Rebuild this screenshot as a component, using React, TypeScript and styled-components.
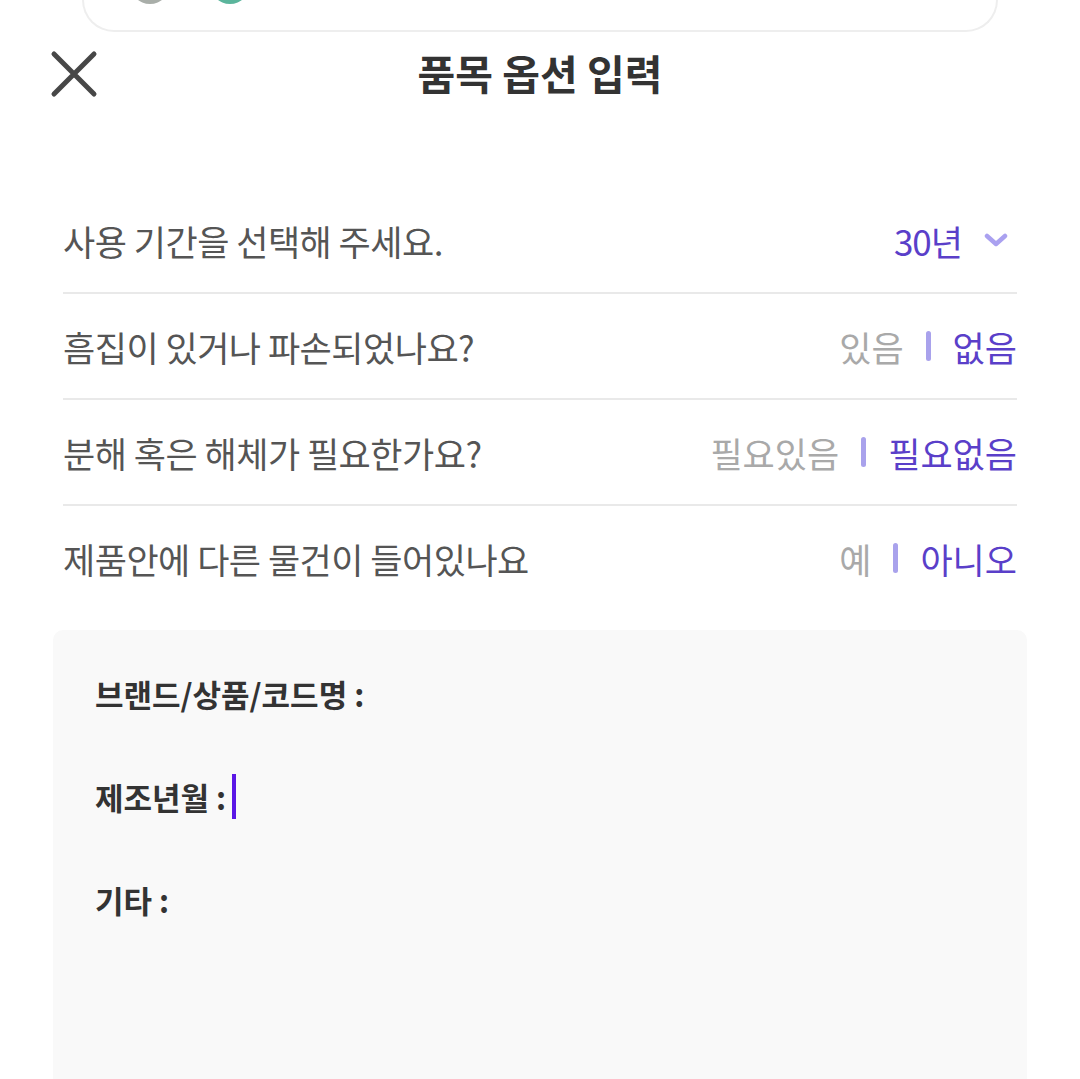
import { createGlobalStyle } from "styled-components"
import styled from "styled-components"

const GlobalStyle = createGlobalStyle`
  html, body {
    margin: 0;
    padding: 0;
    background: #ffffff;
    font-family: "Noto Sans CJK KR", "Noto Sans", sans-serif;
  }
`

const Page = styled.div`
  width: 1080px;
  height: 1079px;
  overflow: hidden;
`

const TopCard = styled.div`
  box-sizing: border-box;
  height: 32px;
  margin: 0 82px;
  border: 2px solid #eeeeee;
  border-top: none;
  border-radius: 0 0 32px 32px;
  overflow: hidden;
  display: flex;
  align-items: flex-end;
  gap: 40px;
  padding: 0 0 26px 46px;
`

const Dot = styled.div<{ $color: string }>`
  flex: none;
  width: 40px;
  height: 40px;
  border-radius: 50%;
  background: ${(p) => p.$color};
`

const Header = styled.div`
  position: relative;
  box-sizing: border-box;
  height: 86px;
  padding-bottom: 6px;
  display: flex;
  align-items: center;
  justify-content: center;
`

const CloseButton = styled.button`
  position: absolute;
  left: 48px;
  top: 16px;
  width: 52px;
  height: 52px;
  padding: 0;
  border: none;
  background: none;
  display: flex;
  align-items: center;
  justify-content: center;
`

const Title = styled.h1`
  margin: 0;
  font-size: 41px;
  font-weight: 700;
  color: #333333;
`

const List = styled.div`
  margin: 70px 63px 0;
  display: flex;
  flex-direction: column;
`

const Row = styled.div<{ $last?: boolean }>`
  flex: none;
  height: 104px;
  display: flex;
  align-items: center;
  justify-content: space-between;
  border-bottom: 2px solid ${(p) => (p.$last ? "transparent" : "#e9e9e9")};
`

const Label = styled.span`
  font-size: 35px;
  color: #555555;
  letter-spacing: -0.5px;
`

const Select = styled.div`
  display: flex;
  align-items: center;
  gap: 22px;
  padding-right: 9px;
`

const Value = styled.span`
  font-size: 35px;
  color: #5a3fc9;
  letter-spacing: -1px;
`

const Toggle = styled.div`
  display: flex;
  align-items: center;
  gap: 22px;
`

const Option = styled.span<{ $active: boolean }>`
  font-size: 35px;
  color: ${(p) => (p.$active ? "#5a3fc9" : "#a9a9a9")};
`

const Bar = styled.span`
  width: 5px;
  height: 30px;
  border-radius: 3px;
  background: #a9a2ec;
`

const Memo = styled.div`
  margin: 18px 53px 0;
  height: 520px;
  border-radius: 10px;
  background: #f9f9f9;
  padding: 12px 42px;
  display: flex;
  flex-direction: column;
`

const MemoLine = styled.div`
  flex: none;
  height: 103px;
  display: flex;
  align-items: center;
  font-size: 31px;
  font-weight: 700;
  color: #333333;
`

const Caret = styled.span`
  width: 4px;
  height: 45px;
  margin-left: 6px;
  background: #5b17e6;
`

const options = [
  { label: "흠집이 있거나 파손되었나요?", a: "있음", b: "없음" },
  { label: "분해 혹은 해체가 필요한가요?", a: "필요있음", b: "필요없음" },
  { label: "제품안에 다른 물건이 들어있나요", a: "예", b: "아니오" },
]

export default function App() {
  return (
    <Page>
      <GlobalStyle />
      <TopCard>
        <Dot $color="#a9aea9" />
        <Dot $color="#5bb59c" />
      </TopCard>
      <Header>
        <CloseButton aria-label="닫기">
          <svg width="48" height="48" viewBox="0 0 48 48" fill="none">
            <path d="M4 4L44 44M44 4L4 44" stroke="#474747" strokeWidth="5" strokeLinecap="round" />
          </svg>
        </CloseButton>
        <Title>품목 옵션 입력</Title>
      </Header>
      <List>
        <Row>
          <Label>사용 기간을 선택해 주세요.</Label>
          <Select>
            <Value>30년</Value>
            <svg width="24" height="14" viewBox="0 0 24 14" fill="none">
              <path d="M3 3L12 11L21 3" stroke="#aaa1f0" strokeWidth="4.5" strokeLinecap="round" strokeLinejoin="round" />
            </svg>
          </Select>
        </Row>
        {options.map((o, i) => (
          <Row key={o.label} $last={i === options.length - 1}>
            <Label>{o.label}</Label>
            <Toggle>
              <Option $active={false}>{o.a}</Option>
              <Bar />
              <Option $active>{o.b}</Option>
            </Toggle>
          </Row>
        ))}
      </List>
      <Memo>
        <MemoLine>브랜드/상품/코드명 :</MemoLine>
        <MemoLine>
          제조년월 :<Caret />
        </MemoLine>
        <MemoLine>기타 :</MemoLine>
      </Memo>
    </Page>
  )
}
